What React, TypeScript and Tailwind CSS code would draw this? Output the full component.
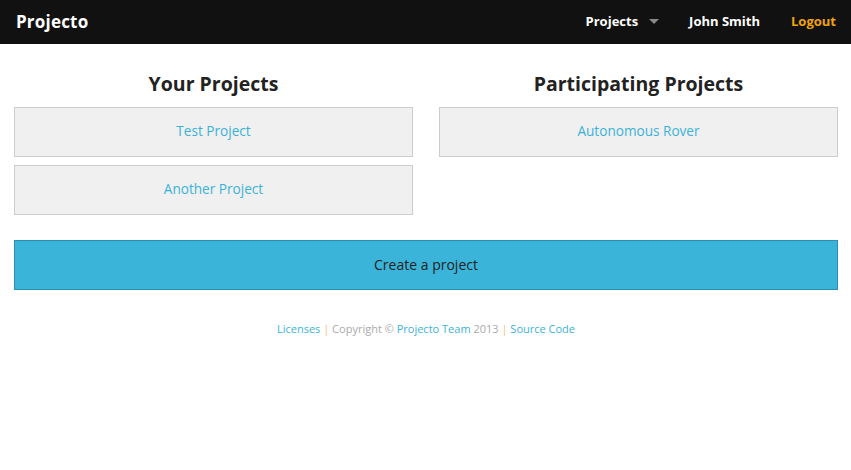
import React from "react";

const font = { fontFamily: '"Open Sans", "Noto Sans", sans-serif' };

function ProjectBox({ name }: { name: string }) {
  return (
    <div className="h-[50px] border border-[#cccccc] bg-[#f0f0f0] flex items-center justify-center pb-[1px]">
      <a className="text-[13.6px] text-[#3bb3d8]">{name}</a>
    </div>
  );
}

export default function App() {
  return (
    <div className="min-h-[470px] bg-white" style={font}>
      <nav className="h-[44px] bg-[#111111] flex items-center pl-[16px] pr-[15px]">
        <span className="text-white font-bold text-[17px] tracking-[0.2px]">Projecto</span>
        <div className="ml-auto flex items-center text-[13px] font-bold">
          <span className="text-white">Projects</span>
          <span className="ml-[11px] w-0 h-0 border-l-[5px] border-r-[5px] border-t-[5px] border-l-transparent border-r-transparent border-t-[#888888] mt-[-2px]" />
          <span className="text-white ml-[30px]">John Smith</span>
          <span className="text-[#f0a30a] ml-[31px]">Logout</span>
        </div>
      </nav>
      <div className="px-[14px] pr-[13px]">
        <div className="grid grid-cols-2 gap-x-[26px] mt-[27px]">
          <div className="flex flex-col">
            <h2 className="text-center font-bold text-[19.5px] text-[#222222] leading-[26px] mb-[10px]">Your Projects</h2>
            <div className="flex flex-col gap-[8px]">
              <ProjectBox name="Test Project" />
              <ProjectBox name="Another Project" />
            </div>
          </div>
          <div className="flex flex-col">
            <h2 className="text-center font-bold text-[19.5px] text-[#222222] leading-[26px] mb-[10px]">Participating Projects</h2>
            <div className="flex flex-col gap-[8px]">
              <ProjectBox name="Autonomous Rover" />
            </div>
          </div>
        </div>
        <div className="mt-[25px] h-[50px] bg-[#3bb4da] border border-[#2a8fb0] flex items-center justify-center pb-[2px]">
          <span className="text-[14px] text-[#222222]">Create a project</span>
        </div>
        <div className="mt-[31px] text-center text-[11px] text-[#aaaaaa]">
          <a className="text-[#3bb3d8]">Licenses</a> <span className="text-[#f0c080]">|</span> Copyright © <a className="text-[#3bb3d8]">Projecto Team</a> 2013 <span className="text-[#f0c080]">|</span> <a className="text-[#3bb3d8]">Source Code</a>
        </div>
      </div>
    </div>
  );
}
